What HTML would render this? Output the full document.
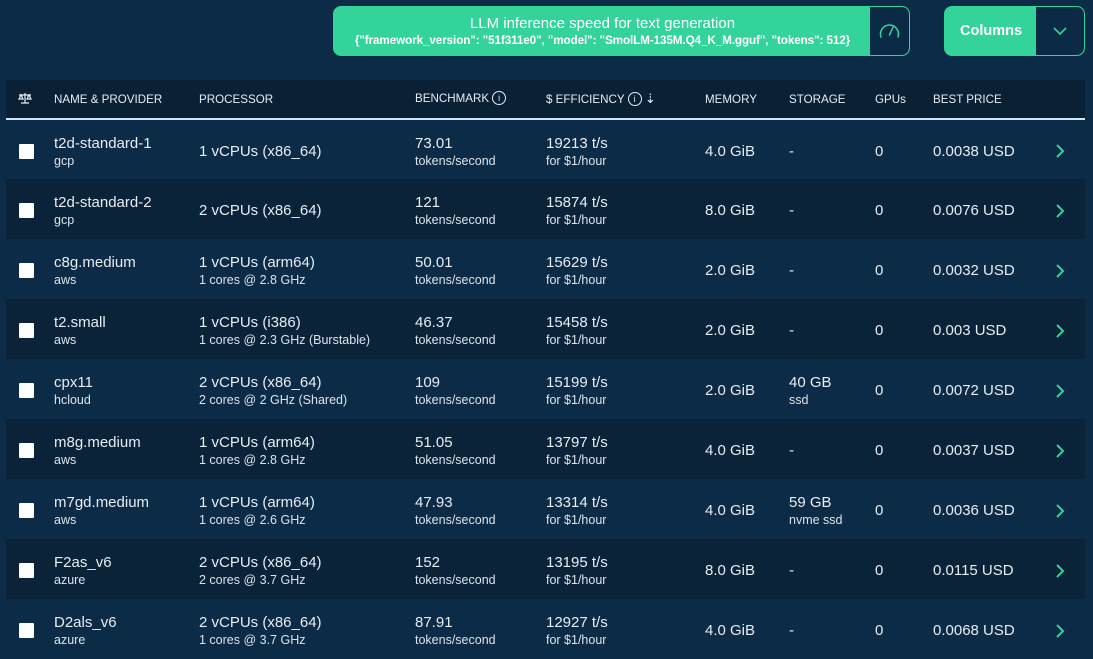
<!DOCTYPE html>
<html><head><meta charset="utf-8"><style>
*{box-sizing:border-box;margin:0;padding:0}
body{width:1093px;height:657px;background:#0c2b46;font-family:"Liberation Sans",sans-serif;color:#e6edf3;overflow:hidden;position:relative}
.btn1{position:absolute;left:333px;top:6px;width:577px;height:50px;background:#34d399;border:1px solid #34d399;border-radius:8px;overflow:hidden}
.btn1 .t{position:absolute;left:0;top:0;width:537px;height:48px;text-align:center;color:#fff}
.btn1 .t1{font-size:15px;margin-top:8px}
.btn1 .t2{font-size:11.7px;margin-top:2px;font-weight:bold;letter-spacing:-0.1px}
.ic{position:absolute;right:0;top:0;width:39px;height:48px;background:#0b2a45;border-radius:0 7px 7px 0}
.btn2{position:absolute;left:944px;top:6px;width:141px;height:50px;background:#34d399;border:1px solid #34d399;border-radius:8px;overflow:hidden}
.btn2 .t{position:absolute;left:0;top:16px;width:92px;text-align:center;color:#fff;font-size:14.5px;font-weight:bold}
.btn2 .ic{width:48px}
table{position:absolute;left:6px;top:80px;width:1079px;border-collapse:collapse;table-layout:fixed}
th{height:39px;background:#0a2035;text-align:left;font-weight:normal;font-size:11.6px;color:#e6edf3;border-bottom:2px solid #cfe8f5;white-space:nowrap}
td{height:60px;font-size:15px;vertical-align:middle;white-space:nowrap;overflow:hidden;padding-top:3px}
tr:nth-child(even) td{background:#0a2338}
.s{font-size:12.5px;color:#dbe4ea;margin-top:2px}
.cb{width:15px;height:15px;background:#fff;margin-left:13px;border-radius:1px}
.ci{display:inline-block;width:14px;height:14px;border:1.3px solid #e6edf3;border-radius:50%;font-size:9px;text-align:center;line-height:12px;vertical-align:middle;margin-left:3px;position:relative;top:-1px}
</style></head><body>
<div class="btn1"><div class="t"><div class="t1">LLM inference speed for text generation</div><div class="t2">{"framework_version": "51f311e0", "model": "SmolLM-135M.Q4_K_M.gguf", "tokens": 512}</div></div>
<div class="ic"><svg width="39" height="48" viewBox="0 0 39 48"><path d="M11 30 A9 9 0 1 1 28 30" fill="none" stroke="#34d399" stroke-width="1.5" stroke-linecap="round"/><path d="M19.5 28 L23 20" stroke="#34d399" stroke-width="1.5" stroke-linecap="round"/></svg></div></div>
<div class="btn2"><div class="t">Columns</div><div class="ic"><svg width="48" height="48" viewBox="0 0 48 48"><path d="M18 21 L24 27 L30 21" fill="none" stroke="#34d399" stroke-width="1.6"/></svg></div></div>
<table>
<colgroup><col style="width:48px"><col style="width:145px"><col style="width:216px"><col style="width:131px"><col style="width:159px"><col style="width:84px"><col style="width:86px"><col style="width:58px"><col style="width:118px"><col></colgroup>
<tr><th style="padding-left:12px"><svg width="14" height="12" viewBox="0 0 14 12"><path d="M7 1V11M3 11H11M1 3H13M3 3L1 7H5ZM11 3L9 7H13Z" fill="none" stroke="#e6edf3" stroke-width="1.2"/></svg></th><th>NAME &amp; PROVIDER</th><th>PROCESSOR</th><th>BENCHMARK<span class="ci">i</span></th><th>$ EFFICIENCY<span class="ci">i</span> <span style="font-size:13px">⇣</span></th><th>MEMORY</th><th>STORAGE</th><th>GPUs</th><th>BEST PRICE</th><th></th></tr>
<tbody id="b"></tbody>
</table>
<script>
const d=[["t2d-standard-1","gcp","1 vCPUs (x86_64)","","73.01","19213","4.0","-","","0.0038"],
["t2d-standard-2","gcp","2 vCPUs (x86_64)","","121","15874","8.0","-","","0.0076"],
["c8g.medium","aws","1 vCPUs (arm64)","1 cores @ 2.8 GHz","50.01","15629","2.0","-","","0.0032"],
["t2.small","aws","1 vCPUs (i386)","1 cores @ 2.3 GHz (Burstable)","46.37","15458","2.0","-","","0.003"],
["cpx11","hcloud","2 vCPUs (x86_64)","2 cores @ 2 GHz (Shared)","109","15199","2.0","40 GB","ssd","0.0072"],
["m8g.medium","aws","1 vCPUs (arm64)","1 cores @ 2.8 GHz","51.05","13797","4.0","-","","0.0037"],
["m7gd.medium","aws","1 vCPUs (arm64)","1 cores @ 2.6 GHz","47.93","13314","4.0","59 GB","nvme ssd","0.0036"],
["F2as_v6","azure","2 vCPUs (x86_64)","2 cores @ 3.7 GHz","152","13195","8.0","-","","0.0115"],
["D2als_v6","azure","2 vCPUs (x86_64)","1 cores @ 3.7 GHz","87.91","12927","4.0","-","","0.0068"]];
let h="";for(const r of d){h+=`<tr><td><div class="cb"></div></td><td>${r[0]}<div class="s">${r[1]}</div></td><td>${r[2]}${r[3]?`<div class="s">${r[3]}</div>`:""}</td><td>${r[4]}<div class="s">tokens/second</div></td><td>${r[5]} t/s<div class="s">for $1/hour</div></td><td>${r[6]} GiB</td><td>${r[7]}${r[8]?`<div class="s">${r[8]}</div>`:""}</td><td>0</td><td>${r[9]} USD</td><td><svg width="20" height="20" viewBox="0 0 20 20" style="margin-left:-1px;display:block"><path d="M7 4L13 10L7 16" fill="none" stroke="#34d399" stroke-width="2"/></svg></td></tr>`}
document.getElementById("b").innerHTML=h;
</script>
</body></html>
